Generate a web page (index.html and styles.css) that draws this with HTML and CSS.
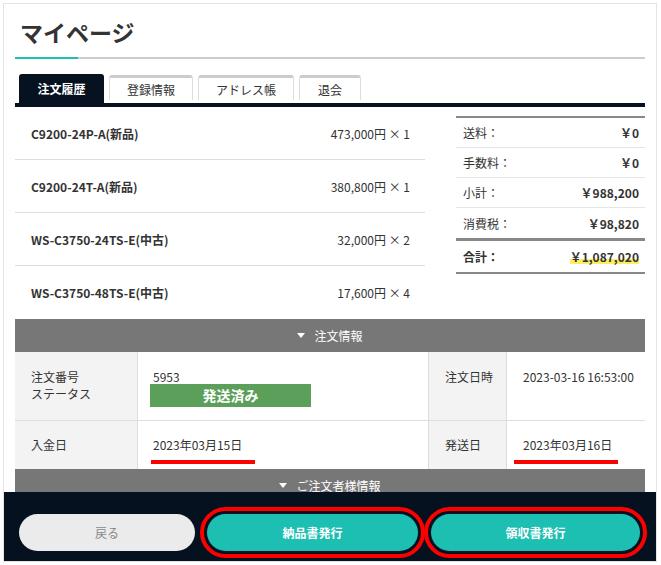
FILE: index.html
```html
<!DOCTYPE html>
<html lang="ja">
<head>
<meta charset="utf-8">
<title>マイページ</title>
<link rel="stylesheet" href="styles.css">
</head>
<body>
<div class="card">
  <div class="content">
    <h1 class="title">マイページ</h1>
    <div class="title-rule"><span class="title-accent"></span></div>

    <div class="tabs">
      <div class="tab tab-active">注文履歴</div>
      <div class="tab tab-reg">登録情報</div>
      <div class="tab tab-addr">アドレス帳</div>
      <div class="tab tab-quit">退会</div>
    </div>
    <div class="tab-bar"></div>

    <div class="order">
      <div class="items">
        <div class="item"><span class="item-name">C9200-24P-A(新品)</span><span class="item-price">473,000円 × 1</span></div>
        <div class="item"><span class="item-name">C9200-24T-A(新品)</span><span class="item-price">380,800円 × 1</span></div>
        <div class="item"><span class="item-name">WS-C3750-24TS-E(中古)</span><span class="item-price">32,000円 × 2</span></div>
        <div class="item"><span class="item-name">WS-C3750-48TS-E(中古)</span><span class="item-price">17,600円 × 4</span></div>
      </div>
      <div class="summary">
        <div class="sum-row"><span>送料：</span><span class="sum-val">￥0</span></div>
        <div class="sum-row"><span>手数料：</span><span class="sum-val">￥0</span></div>
        <div class="sum-row"><span>小計：</span><span class="sum-val">￥988,200</span></div>
        <div class="sum-row sum-tax"><span>消費税：</span><span class="sum-val">￥98,820</span></div>
        <div class="sum-row sum-total"><span>合計：</span><span class="sum-val sum-highlight">￥1,087,020</span></div>
      </div>
    </div>

    <div class="section-bar"><span class="tri"></span>注文情報</div>
    <div class="info">
      <div class="cell label">注文番号<br>ステータス</div>
      <div class="cell value">
        <div>5953</div>
        <div class="badge">発送済み</div>
      </div>
      <div class="cell label">注文日時</div>
      <div class="cell value value-b">2023-03-16 16:53:00</div>

      <div class="cell label row2">入金日</div>
      <div class="cell value row2">
        <div>2023年03月15日</div>
        <div class="mark mark-a"></div>
      </div>
      <div class="cell label row2">発送日</div>
      <div class="cell value value-b row2">
        <div>2023年03月16日</div>
        <div class="mark mark-b"></div>
      </div>
    </div>
    <div class="section-bar"><span class="tri"></span>ご注文者様情報</div>
    <div class="filler"></div>
  </div>

  <div class="footer">
    <div class="btn btn-back">戻る</div>
    <div class="btn btn-issue btn-delivery">納品書発行</div>
    <div class="btn btn-issue btn-receipt">領収書発行</div>
  </div>
</div>
</body>
</html>
```

FILE: styles.css
```css
* {
  box-sizing: border-box;
  margin: 0;
  padding: 0;
}

body {
  margin: 0;
  background: #fff;
  font-family: "Noto Sans CJK JP", "Noto Sans", sans-serif;
  font-size: 12px;
  color: #333;
}

.card {
  position: relative;
  margin: 3px 0 0 3px;
  width: 654px;
  height: 559px;
  border: 1px solid #e3e3e3;
  overflow: hidden;
  background: #fff;
}

.content {
  padding: 11px 11px 0 11px;
}

.title {
  font-size: 23px;
  font-weight: 700;
  line-height: 34px;
  height: 34px;
  padding-left: 5px;
  color: #333;
}

.title-rule {
  margin-top: 8px;
  height: 2px;
  background: #cccccc;
}

.title-accent {
  display: block;
  width: 63px;
  height: 2px;
  background: #1ec0b4;
}

.tabs {
  margin-top: 15px;
  display: flex;
  align-items: flex-start;
  gap: 5px;
  padding-left: 4px;
  height: 29px;
}

.tab {
  height: 25px;
  margin-top: 1px;
  border: 1px solid #dddddd;
  border-top: 3px solid #cccccc;
  border-bottom: none;
  border-radius: 3px 3px 0 0;
  display: flex;
  align-items: center;
  justify-content: center;
  font-size: 12px;
  color: #333;
  background: #fff;
}

.tab-active {
  width: 85px;
  height: 29px;
  margin-top: 0;
  border: none;
  background: #06121f;
  color: #fff;
  font-weight: 700;
}

.tab-reg { width: 84px; }
.tab-addr { width: 96px; }
.tab-quit { width: 62px; }

.tab-bar {
  height: 4px;
  background: #06121f;
}

.order {
  display: flex;
  justify-content: space-between;
  align-items: flex-start;
}

.items {
  width: 410px;
}

.item {
  height: 53px;
  display: flex;
  align-items: center;
  justify-content: space-between;
  padding: 0 15px 0 16px;
  border-bottom: 1px solid #dddddd;
}

.item:last-child {
  border-bottom: none;
}

.item-name {
  font-weight: 700;
}

.summary {
  width: 189px;
  margin-top: 9px;
  border-top: 2px solid #888;
  border-bottom: 2px solid #888;
}

.sum-row {
  height: 30px;
  display: flex;
  align-items: center;
  justify-content: space-between;
  padding: 0 6px 0 7px;
  border-bottom: 1px solid #e6e6e6;
}

.sum-val {
  font-weight: 700;
}

.sum-tax {
  height: 33px;
  border-bottom: 3px solid #888;
}

.sum-total {
  height: 31px;
  border-bottom: none;
  font-weight: 700;
}

.sum-highlight {
  background: linear-gradient(to bottom, transparent 62%, #fcee5e 62%, #fcee5e 96%, transparent 96%);
}

.section-bar {
  height: 33px;
  background: #777777;
  color: #fff;
  display: flex;
  align-items: center;
  justify-content: center;
  font-size: 12px;
}

.tri {
  width: 0;
  height: 0;
  border-left: 4px solid transparent;
  border-right: 4px solid transparent;
  border-top: 5px solid #fff;
  margin-right: 9px;
}

.info {
  display: grid;
  grid-template-columns: 122px 290px 77px 138px;
  grid-template-rows: 68px 48px;
  gap: 1px;
  background: #dddddd;
}

.cell {
  background: #fff;
  padding: 16px 0 0 15px;
  line-height: 17px;
}

.label {
  background: #f3f3f3;
  padding-left: 16px;
}

.value-b {
  padding-left: 16px;
}

.row2 {
  padding-top: 15px;
}

.badge {
  width: 161px;
  height: 23px;
  margin-top: -1px;
  margin-left: -3px;
  background: #5b9f5b;
  color: #fff;
  font-size: 14px;
  font-weight: 700;
  line-height: 23px;
  text-align: center;
}

.mark {
  width: 104px;
  height: 4px;
  margin-top: 7px;
  background: #ff0000;
}

.mark-a { margin-left: -2px; }
.mark-b { margin-left: -9px; }

.filler {
  height: 80px;
}

.footer {
  position: absolute;
  left: 0;
  right: 0;
  bottom: 0;
  height: 69px;
  background: #06111f;
  display: flex;
  align-items: flex-start;
  padding: 22px 0 0 15px;
}

.btn {
  height: 37px;
  border-radius: 19px;
  display: flex;
  align-items: center;
  justify-content: center;
  font-size: 12px;
}

.btn-back {
  width: 176px;
  background: #ebebeb;
  color: #888;
}

.btn-issue {
  background: #1dbfb3;
  color: #fff;
  font-weight: 700;
  outline: 4px solid #ff0000;
  outline-offset: 3px;
}

.btn-delivery {
  width: 211px;
  margin-left: 12px;
}

.btn-receipt {
  width: 209px;
  margin-left: 13px;
}
```
